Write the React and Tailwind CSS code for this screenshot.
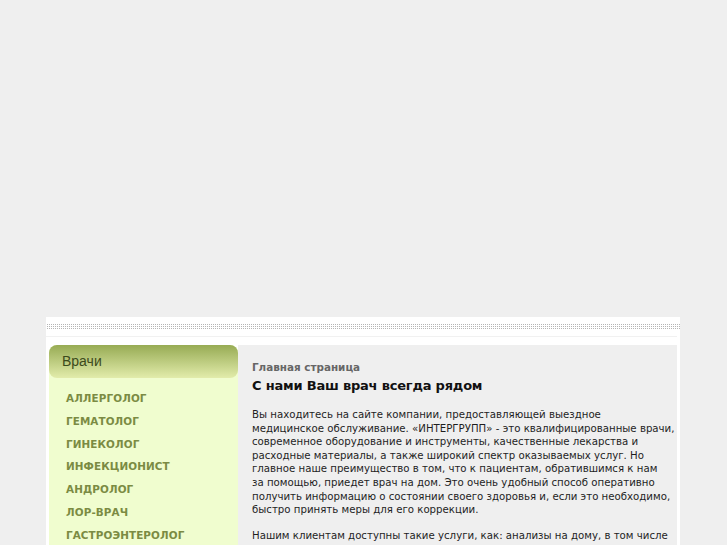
import React from "react";

const items = [
  "АЛЛЕРГОЛОГ",
  "ГЕМАТОЛОГ",
  "ГИНЕКОЛОГ",
  "ИНФЕКЦИОНИСТ",
  "АНДРОЛОГ",
  "ЛОР-ВРАЧ",
  "ГАСТРОЭНТЕРОЛОГ",
];

const p1 = [
  "Вы находитесь на сайте компании, предоставляющей выездное",
  "медицинское обслуживание. «ИНТЕРГРУПП» - это квалифицированные врачи,",
  "современное оборудование и инструменты, качественные лекарства и",
  "расходные материалы, а также широкий спектр оказываемых услуг. Но",
  "главное наше преимущество в том, что к пациентам, обратившимся к нам",
  "за помощью, приедет врач на дом. Это очень удобный способ оперативно",
  "получить информацию о состоянии своего здоровья и, если это необходимо,",
  "быстро принять меры для его коррекции.",
];

const p2 = [
  "Нашим клиентам доступны такие услуги, как: анализы на дому, в том числе",
  "забор крови на дому, капельницы на дому и многое другое.",
];

export default function App() {
  return (
    <div className="w-[727px] h-[545px] overflow-hidden bg-[#efefef] pt-[317px] font-['DejaVu_Sans',sans-serif]">
      <div className="ml-[46px] w-[634px] h-[228px] bg-white pt-[6px]">
        <div className="h-[7px] bg-[linear-gradient(90deg,#fff_1px,transparent_1px),linear-gradient(#fff_1px,#b5b5b5_1px)] bg-[length:2px_2px]" />
        <div className="mt-[6px] h-px w-[631px] bg-[#f1f1f1]" />
        <div className="mt-[8px] flex pl-[3px]">
          <div className="w-[189px] rounded-t-[8px] bg-[#f0fdcf] h-[300px]">
            <div className="h-[33px] rounded-[8px] bg-[linear-gradient(#97ab54,#e2ecab)] pl-[13px] flex items-center font-['Liberation_Sans',sans-serif] text-[14px] text-[#3c4a1c]">
              Врачи
            </div>
            <ul className="pt-[9px] pl-[17px]">
              {items.map((t) => (
                <li
                  key={t}
                  className="h-[22.8px] leading-[23px] text-[10.4px] font-bold tracking-[0.1px] text-[#7b8b43]"
                >
                  {t}
                </li>
              ))}
            </ul>
          </div>
          <div className="w-[439px] bg-[#efefef] h-[300px] pl-[14px] pt-[15px] text-[#1a1a1a]">
            <div className="text-[10.4px] font-bold leading-[14px] text-[#666]">
              Главная страница
            </div>
            <h1 className="mt-[3px] text-[13px] leading-[18px] font-bold tracking-[-0.2px] text-[#111]">
              С нами Ваш врач всегда рядом
            </h1>
            <p className="mt-[13px] text-[10.2px] leading-[13.6px] text-[#1e1e1e]">
              {p1.map((l) => (
                <span key={l} className="block whitespace-nowrap">{l}</span>
              ))}
            </p>
            <p className="mt-[12.4px] text-[10.2px] leading-[13.6px] text-[#1e1e1e]">
              {p2.map((l) => (
                <span key={l} className="block whitespace-nowrap">{l}</span>
              ))}
            </p>
          </div>
        </div>
      </div>
    </div>
  );
}
